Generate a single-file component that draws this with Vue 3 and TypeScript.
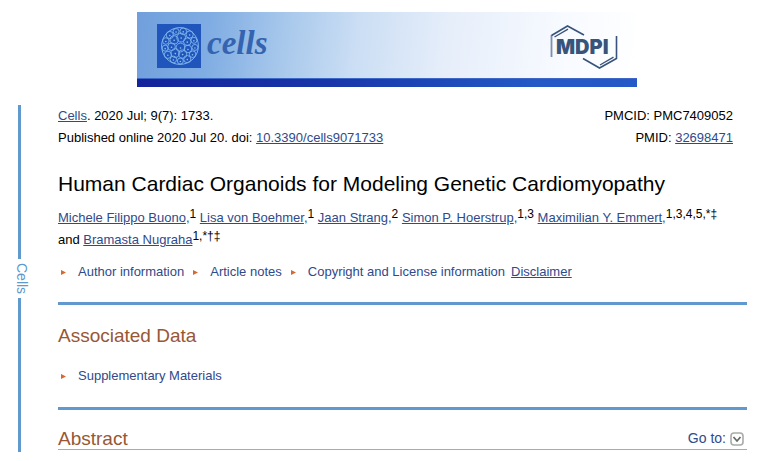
<script setup lang="ts">
interface Cell {
  x: number
  y: number
  r: number
}

interface Author {
  name: string
  marks: string
}

function ring(count: number, radius: number, size: number, phase: number): Cell[] {
  return Array.from({ length: count }, (_, i) => {
    const a = ((i + phase) / count) * Math.PI * 2
    return {
      x: 23 + Math.cos(a) * radius,
      y: 22 + Math.sin(a) * radius,
      r: size + (i % 3) * 0.3,
    }
  })
}

const cells: Cell[] = [
  ...ring(13, 15, 3, 0.2),
  ...ring(7, 8.5, 3.8, 0.4),
  { x: 23.5, y: 23.5, r: 4.4 },
]

const authors: Author[] = [
  { name: 'Michele Filippo Buono', marks: '1' },
  { name: 'Lisa von Boehmer', marks: '1' },
  { name: 'Jaan Strang', marks: '2' },
  { name: 'Simon P. Hoerstrup', marks: '1,3' },
  { name: 'Maximilian Y. Emmert', marks: '1,3,4,5,*‡' },
]

const notes: string[] = ['Author information', 'Article notes', 'Copyright and License information']
</script>

<template>
  <div class="page">
    <header class="banner">
      <div class="banner-main">
        <a class="journal" href="#cells">
          <svg class="cell-logo" viewBox="0 0 44 44" aria-hidden="true">
            <rect width="44" height="44" fill="#2056bc" />
            <g fill="none" stroke="#7fb4ec">
              <circle cx="23" cy="22" r="18.4" stroke-width="1" />
              <circle v-for="(c, i) in cells" :key="i" :cx="c.x" :cy="c.y" :r="c.r" stroke-width="0.9" />
            </g>
            <g fill="#8fc0f2">
              <circle v-for="(c, i) in cells" :key="i" :cx="c.x" :cy="c.y + 0.5" r="0.8" />
            </g>
          </svg>
          <span class="journal-name">cells</span>
        </a>
        <a class="publisher" href="#mdpi">
          <svg class="mdpi" viewBox="0 0 68 46" role="img" aria-label="MDPI">
            <g fill="none" stroke="#39547b">
              <path d="M1.500 33V11" stroke="#7c8fae" stroke-width="1.800" />
              <path d="M1.500 11.500L17.500 2L34 11" stroke-width="1.600" />
              <path d="M4.500 13L18 5.200" stroke-width="1.400" />
              <path d="M66.500 12V34.500L49.500 44L33 34.500" stroke-width="1.600" />
              <path d="M63.500 33.200L50 41" stroke-width="1.400" />
            </g>
            <text x="6" y="30" font-size="20" fill="#39547b">MDPI</text>
          </svg>
        </a>
      </div>
      <div class="banner-strip"></div>
    </header>

    <div class="body">
      <aside class="rail">
        <span class="rail-line"></span>
        <a class="rail-name" href="#cells">Cells</a>
        <span class="rail-line"></span>
      </aside>

      <main class="article">
        <div class="front">
          <div class="citation">
            <div><a href="#cells">Cells</a>. 2020 Jul; 9(7): 1733.</div>
            <div>Published online 2020 Jul 20. doi: <a href="#doi">10.3390/cells9071733</a></div>
          </div>
          <div class="ids">
            <div>PMCID: PMC7409052</div>
            <div>PMID: <a href="#pmid">32698471</a></div>
          </div>
        </div>

        <h1>Human Cardiac Organoids for Modeling Genetic Cardiomyopathy</h1>

        <div class="authors">
          <template v-for="a in authors" :key="a.name"
            ><a href="#author">{{ a.name }}</a><i>,</i><sup>{{ a.marks }}</sup>{{ ' ' }}</template
          >
          <br />and <a href="#author">Bramasta Nugraha</a><sup>1,*†‡</sup>
        </div>

        <div class="notes">
          <a v-for="n in notes" :key="n" class="toggle" href="#notes">
            <svg class="arrow" viewBox="0 0 5 5" aria-hidden="true"><path d="M0 0L5 2.500L0 5Z" /></svg>{{ n }}
          </a>
          <a class="disclaimer" href="#disclaimer">Disclaimer</a>
        </div>

        <section class="associated">
          <h2>Associated Data</h2>
          <a class="toggle" href="#supplementary">
            <svg class="arrow" viewBox="0 0 5 5" aria-hidden="true"><path d="M0 0L5 2.500L0 5Z" /></svg>Supplementary Materials
          </a>
        </section>

        <section class="abstract">
          <h2>Abstract</h2>
          <button class="goto" type="button">
            Go to:
            <svg viewBox="0 0 14 14" aria-hidden="true">
              <rect x="1" y="1" width="12" height="12" rx="3" fill="#fff" stroke="#a8aca8" stroke-width="1.600" />
              <path d="M3.500 5L7 9L10.500 5" fill="none" stroke="#666" stroke-width="1.700" />
            </svg>
          </button>
        </section>
      </main>
    </div>
  </div>
</template>

<style>
body {
  margin: 0;
  background: #fff;
}
</style>

<style scoped>
.page {
  padding: 12px 34px 9px 18px;
  font-family: "Liberation Sans", Arial, sans-serif;
  font-size: 13px;
  line-height: 22px;
  color: #000;
}
a {
  color: #2f4a8b;
}
.banner {
  max-width: 500px;
  margin: 0 auto 18px 119px;
}
.banner-main {
  display: flex;
  justify-content: space-between;
  align-items: flex-start;
  height: 66px;
  box-sizing: border-box;
  padding: 12px 19px 0 20px;
  background: linear-gradient(97deg, #709fdc 0%, #80ade3 15%, #a6c7eb 29%, #cbdef4 44%, #e6eefa 62%, #f7faff 84%, #fff 100%);
}
.banner-strip {
  height: 9px;
  box-sizing: border-box;
  border-top: 1px solid #3d68c8;
  background: linear-gradient(90deg, #14249a, #1837aa 40%, #2459c6 80%, #2558c8);
}
.journal {
  display: flex;
  gap: 6px;
  text-decoration: none;
}
.cell-logo {
  width: 44px;
  height: 44px;
}
.journal-name {
  font: italic bold 33px/38px "Liberation Serif", "Times New Roman", serif;
  color: #3463b0;
}
.mdpi {
  display: block;
  width: 68px;
  height: 46px;
  font-family: Inter, "Liberation Sans", sans-serif;
  font-weight: 900;
}
.body {
  display: flex;
  gap: 28px;
}
.rail {
  display: flex;
  flex-direction: column;
  align-items: flex-start;
  width: 12px;
}
.rail-line {
  flex: 1;
  width: 3px;
  background: #5f99ce;
}
.rail-name {
  margin-left: -4px;
  padding: 4px 0;
  writing-mode: vertical-rl;
  font-size: 14px;
  line-height: 16px;
  color: #5f99ce;
  text-decoration: none;
}
.article {
  flex: 1;
  min-width: 0;
  padding-bottom: 2px;
}
.front {
  display: flex;
  justify-content: space-between;
  padding-right: 14px;
}
.ids {
  text-align: right;
}
h1 {
  margin: 22px 0 10px;
  font-size: 21px;
  line-height: 26px;
  font-weight: normal;
}
.authors i {
  font-style: normal;
  color: #2f4a8b;
}
sup {
  font-size: 12px;
  line-height: 0;
  vertical-align: 4px;
}
.notes {
  display: flex;
  align-items: center;
  gap: 6px;
  padding: 10px 0 19px;
  border-bottom: 3px solid #5f99ce;
}
.toggle {
  display: inline-flex;
  align-items: center;
  gap: 12px;
  padding-left: 3px;
  text-decoration: none;
}
.arrow {
  width: 5px;
  height: 5px;
  fill: #d9672f;
}
h2 {
  margin: 0;
  font-size: 19px;
  line-height: 22px;
  font-weight: normal;
  color: #985735;
}
.associated {
  display: flex;
  flex-direction: column;
  gap: 18px;
  padding: 20px 0;
  border-bottom: 3px solid #5f99ce;
}
.abstract {
  display: flex;
  justify-content: space-between;
  align-items: center;
  padding: 17px 3px 0 0;
  border-bottom: 1px solid #97b0c8;
}
.abstract h2 {
  padding-top: 1px;
  line-height: 21px;
}
.goto {
  display: flex;
  align-items: center;
  gap: 4px;
  padding: 1px 0 0;
  border: 0;
  background: none;
  font: inherit;
  font-size: 14px;
  line-height: 21px;
  color: #2f4a8b;
}
.goto svg {
  width: 14px;
  height: 14px;
}
</style>
